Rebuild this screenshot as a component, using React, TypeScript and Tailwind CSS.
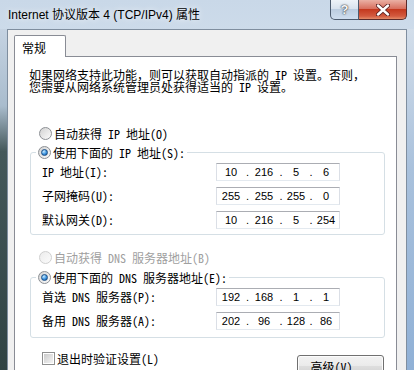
import clsx from 'clsx'

const cjk = "[font-family:'Noto_Sans_Mono_CJK_SC','Noto_Sans_CJK_SC',sans-serif]"

function Radio({ checked, disabled }: { checked?: boolean; disabled?: boolean }) {
  return (
    <span
      className={clsx(
        'flex h-[13px] w-[13px] shrink-0 items-center justify-center rounded-full border',
        disabled
          ? 'border-[#cfcfcf] bg-[linear-gradient(135deg,#ececec,#fbfbfb)]'
          : 'border-[#8c8f94] bg-[linear-gradient(135deg,#d2d2d2,#fcfcfc)]'
      )}
    >
      {checked && (
        <span className="h-[7px] w-[7px] rounded-full border border-[#1c4f86] bg-[radial-gradient(circle_at_35%_30%,#c9ecff,#3b93e0_55%,#0d4a8c)]" />
      )}
    </span>
  )
}

function IpBox({ parts }: { parts: string[] }) {
  return (
    <div className="flex h-[18px] w-[124px] shrink-0 items-center border border-[#abadb3] border-x-[#dbdfe6] border-b-[#e3e9ef] bg-white text-[11px] leading-none text-black [font-family:'Liberation_Sans',Arial,sans-serif]">
      <span className="w-[28px] text-center">{parts[0]}</span>
      <span className="w-[5px] text-center">.</span>
      <span className="w-[28px] text-center">{parts[1]}</span>
      <span className="w-[6px] text-center">.</span>
      <span className="w-[24px] text-center">{parts[2]}</span>
      <span className="w-[6px] text-center">.</span>
      <span className="w-[24px] text-center">{parts[3]}</span>
    </div>
  )
}

function Row({ label, parts }: { label: string; parts: string[] }) {
  return (
    <div className="flex h-[18px] items-center">
      <span className="w-[174px] leading-[12px]">{label}</span>
      <IpBox parts={parts} />
    </div>
  )
}

function Group({ legend, children, pb }: { legend: string; children: React.ReactNode; pb: string }) {
  return (
    <div className={clsx('ml-[15px] mr-[11px] rounded-[3px] border border-[#d5dfe5]', pb)}>
      <div className="-mt-[7px] ml-[5px] flex w-fit items-center gap-[2px] bg-white px-[2px]">
        <Radio checked />
        <span className="leading-[12px]">{legend}</span>
      </div>
      <div className="mt-[4px] flex flex-col gap-[6px] pl-[11px]">{children}</div>
    </div>
  )
}

export default function App() {
  return (
    <div className="flex h-[370px] w-[414px] flex-col overflow-hidden bg-[linear-gradient(180deg,#c9d8e8,#dbe6f1_40%,#e2ebf4)]">
      {/* title bar */}
      <div className="flex h-[29px] shrink-0 items-start justify-between">
        <span className="pl-[8px] pt-[8px] text-[12px] leading-[15px] text-black [font-family:'Liberation_Sans','Noto_Sans_CJK_SC',sans-serif] [text-shadow:0_0_6px_#ffffff]">
          Internet 协议版本 4 (TCP/IPv4) 属性
        </span>
        <div className="mr-[7px] flex h-[20px]">
          <div className="flex w-[29px] items-center justify-center rounded-bl-[5px] border border-t-0 border-[#4c5b6e] bg-[linear-gradient(#eef3f8,#d9e3ee_45%,#bccde0_50%,#cfdeef)] text-[13px] font-bold text-[#f4f6f8] [font-family:'Liberation_Sans',sans-serif] [text-shadow:0_0_1px_#333,0_0_2px_#333]">
            ?
          </div>
          <div className="flex w-[48px] items-center justify-center rounded-br-[5px] border border-l-0 border-t-0 border-[#5a2a2a] bg-[linear-gradient(#eab0a4,#d8705f_45%,#c4391f_50%,#d35a3f_85%,#e48c6a)]">
            <svg width="14" height="12" viewBox="0 0 14 12">
              <path d="M2 1.5 L12 10.5 M12 1.5 L2 10.5" stroke="#5a2020" strokeWidth="4.2" strokeLinecap="round" />
              <path d="M2 1.5 L12 10.5 M12 1.5 L2 10.5" stroke="#ffffff" strokeWidth="2.4" strokeLinecap="round" />
            </svg>
          </div>
        </div>
      </div>

      <div className="flex flex-1">
        <div className="w-[7px] shrink-0 bg-[linear-gradient(180deg,#c5d3e2_0%,#a9bccd_22%,#44585a_35%,#2f4242_100%)]" />
        {/* client area */}
        <div className={clsx('flex flex-1 flex-col border-l border-r border-t border-[#7f8e9f] bg-[#f0f0f0] text-[12px] text-black', cjk)}>
          <div className="relative z-10 -mb-px ml-[6px] mt-[5px] flex h-[22px] w-[52px] items-center rounded-t-[2px] border border-b-0 border-[#898c95] bg-white pl-[7px] pt-[2px] leading-[12px]">
            常规
          </div>
          <div className="ml-[6px] mr-[9px] flex-1 border border-[#898c95] bg-white">
            <p className="pl-[14px] pt-[12px] leading-[12px]">
              如果网络支持此功能，则可以获取自动指派的 IP 设置。否则，
              <br />
              您需要从网络系统管理员处获得适当的 IP 设置。
            </p>

            <div className="ml-[24px] mt-[34px] flex items-center gap-[2px]">
              <Radio />
              <span className="leading-[12px]">自动获得 IP 地址(O)</span>
            </div>

            <div className="mt-[12px]">
              <Group legend="使用下面的 IP 地址(S):" pb="pb-[5px]">
                <Row label="IP 地址(I):" parts={['10', '216', '5', '6']} />
                <Row label="子网掩码(U):" parts={['255', '255', '255', '0']} />
                <Row label="默认网关(D):" parts={['10', '216', '5', '254']} />
              </Group>
            </div>

            <div className="ml-[24px] mt-[16px] flex items-center gap-[2px] text-[#a0a0a0]">
              <Radio disabled />
              <span className="leading-[12px]">自动获得 DNS 服务器地址(B)</span>
            </div>

            <div className="mt-[13px]">
              <Group legend="使用下面的 DNS 服务器地址(E):" pb="pb-[7px]">
                <Row label="首选 DNS 服务器(P):" parts={['192', '168', '1', '1']} />
                <Row label="备用 DNS 服务器(A):" parts={['202', '96', '128', '86']} />
              </Group>
            </div>

            <div className="mt-[14px] flex items-start justify-between">
              <div className="ml-[27px] flex items-center gap-[2px]">
                <span className="flex h-[13px] w-[13px] items-center justify-center border border-[#8e8f8f] bg-white">
                  <span className="h-[9px] w-[9px] bg-[linear-gradient(135deg,#cbcbcb,#f4f4f4)]" />
                </span>
                <span className="leading-[12px]">退出时验证设置(L)</span>
              </div>
              <button className="mr-[12px] mt-[3px] h-[23px] w-[87px] rounded-[3px] border border-[#707070] bg-[linear-gradient(#f2f2f2,#ebebeb_45%,#dddddd_50%,#cfcfcf)] text-[12px] leading-[12px] shadow-[inset_0_0_0_1px_#fcfcfc]">
                高级(V)...
              </button>
            </div>
          </div>
        </div>
        <div className="w-[7px] shrink-0 bg-[linear-gradient(180deg,#d3deea,#a9c1dc_40%,#8fb0d6)]" />
      </div>
    </div>
  )
}
